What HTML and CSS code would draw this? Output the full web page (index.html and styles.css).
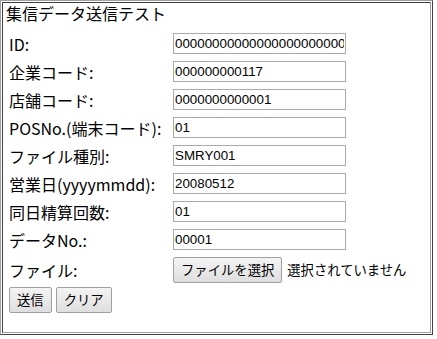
FILE: index.html
```html
<!DOCTYPE html>
<html lang="ja">
<head>
<meta charset="utf-8">
<title>集信データ送信テスト</title>
<link rel="stylesheet" href="styles.css">
</head>
<body>
<div class="frame">
  <div class="cell">
    <div class="title">集信データ送信テスト</div>
    <form class="form">
      <div class="grid">
        <label class="lbl">ID:</label>
        <input class="txt" type="text" value="0000000000000000000000000">
        <label class="lbl">企業コード:</label>
        <input class="txt" type="text" value="000000000117">
        <label class="lbl">店舗コード:</label>
        <input class="txt" type="text" value="0000000000001">
        <label class="lbl">POSNo.(端末コード):</label>
        <input class="txt" type="text" value="01">
        <label class="lbl">ファイル種別:</label>
        <input class="txt" type="text" value="SMRY001">
        <label class="lbl">営業日(yyyymmdd):</label>
        <input class="txt" type="text" value="20080512">
        <label class="lbl">同日精算回数:</label>
        <input class="txt" type="text" value="01">
        <label class="lbl">データNo.:</label>
        <input class="txt" type="text" value="00001">
        <label class="lbl">ファイル:</label>
        <div class="file">
          <span class="btn filebtn">ファイルを選択</span>
          <span class="nofile">選択されていません</span>
        </div>
      </div>
      <div class="actions">
        <button class="btn" type="button">送信</button>
        <button class="btn" type="button">クリア</button>
      </div>
    </form>
  </div>
</div>
</body>
</html>
```

FILE: styles.css
```css
html, body {
  margin: 0;
  padding: 0;
  background: #ffffff;
}
body {
  font-family: "Noto Sans CJK JP", "Noto Sans", sans-serif;
  color: #000000;
}
.frame {
  width: 433px;
  height: 335px;
  box-sizing: border-box;
  border: 1px solid;
  border-color: #a0a0a0 #404040 #404040 #a0a0a0;
  padding: 1px;
}
.cell {
  height: 100%;
  box-sizing: border-box;
  border: 1px solid;
  border-color: #404040 #a0a0a0 #a0a0a0 #404040;
  padding: 0 3px;
}
.title {
  font-size: 16px;
  line-height: 20px;
  height: 20px;
}
.form {
  margin: 10px 0 0 3px;
}
.grid {
  display: grid;
  grid-template-columns: 160px auto;
  column-gap: 4px;
  row-gap: 7px;
  align-items: center;
  justify-content: start;
}
.lbl {
  font-size: 16px;
  line-height: 20px;
  white-space: nowrap;
}
.txt {
  width: 173px;
  height: 21px;
  box-sizing: border-box;
  margin: 0;
  border: 1px solid #a9a9a9;
  padding: 0 1px;
  font-family: "Liberation Sans", Arial, sans-serif;
  font-size: 13.33px;
  color: #000000;
  background: #ffffff;
  outline: none;
}
.file {
  display: flex;
  align-items: center;
  gap: 5px;
}
.btn {
  display: inline-flex;
  align-items: center;
  justify-content: center;
  height: 26px;
  box-sizing: border-box;
  margin: 0;
  padding: 0 7px;
  border: 1px solid #a0a0a0;
  border-radius: 2px;
  background: linear-gradient(#f4f4f4, #dedede);
  font-family: "Noto Sans CJK JP", sans-serif;
  font-size: 13.33px;
  line-height: 16px;
  color: #000000;
  white-space: nowrap;
}
.nofile {
  font-size: 13.33px;
  line-height: 16px;
  white-space: nowrap;
}
.actions {
  display: flex;
  gap: 4px;
  margin-top: 4px;
}
```
